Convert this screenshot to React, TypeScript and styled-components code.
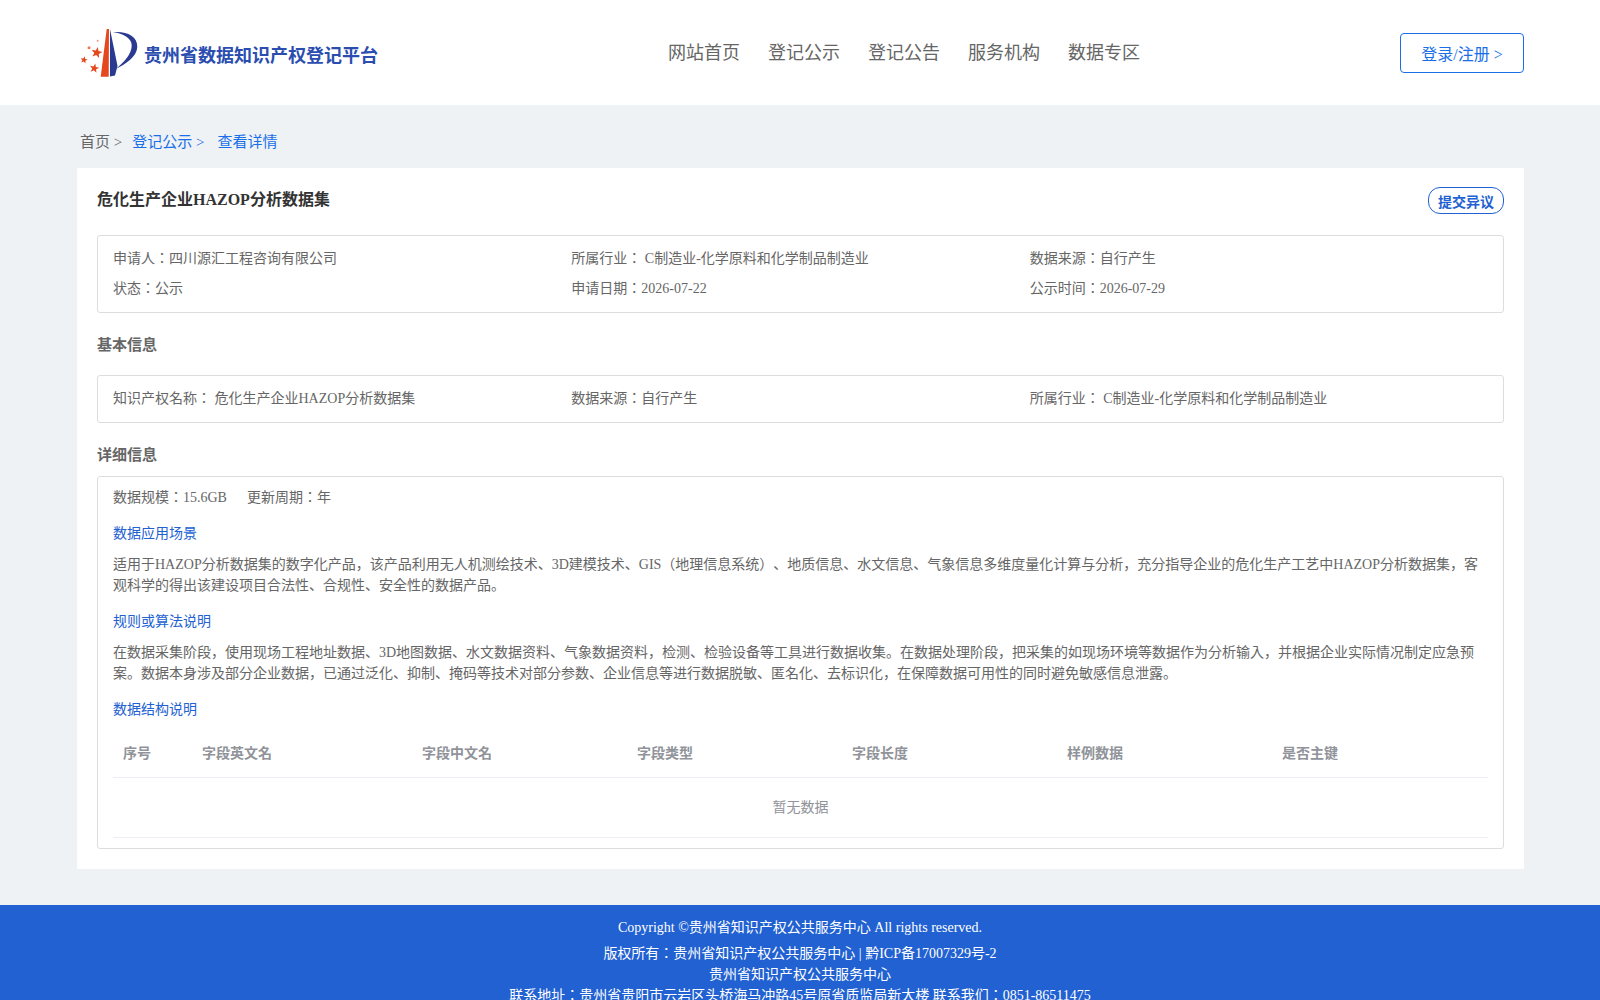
import React from 'react';
import styled, { createGlobalStyle } from 'styled-components';

const GlobalStyle = createGlobalStyle`
  html, body {
    margin: 0;
    padding: 0;
    height: 1000px;
    overflow: hidden;
    background: #eff2f5;
    font-family: "Liberation Serif", "Noto Sans CJK JP", serif;
    font-size: 14px;
    color: #666;
    text-spacing-trim: space-all;
  }
  * { box-sizing: border-box; }
`;

const Header = styled.header`
  height: 105px;
  background: #fff;
  padding: 0 76px 0 80px;
  display: flex;
  align-items: flex-start;
`;

const Brand = styled.div`
  width: 588px;
  padding-top: 28px;
  display: flex;
  align-items: center;
  gap: 6px;
`;

const BrandName = styled.span`
  font-family: "Liberation Sans", "Noto Sans CJK JP", sans-serif;
  font-size: 18px;
  font-weight: 700;
  color: #2b4db0;
  padding-top: 2px;
`;

const Nav = styled.nav`
  display: flex;
  gap: 28px;
  padding-top: 39px;
  flex: 1;
`;

const NavLink = styled.a`
  font-size: 18px;
  line-height: 28px;
  color: #666;
`;

const LoginButton = styled.a`
  margin-top: 33px;
  width: 124px;
  height: 40px;
  border: 1px solid #1a6fe8;
  border-radius: 4px;
  color: #1a6fe8;
  font-size: 16px;
  display: flex;
  align-items: center;
  justify-content: center;
`;

const Main = styled.main`
  padding: 0 76px 0 77px;
`;

const Breadcrumb = styled.div`
  height: 63px;
  padding: 27px 0 0 3px;
  font-size: 15px;
  line-height: 20px;
  display: flex;
`;

const Crumb = styled.span<{ $active?: boolean; $gap?: number }>`
  color: ${p => (p.$active ? '#1a6fe8' : '#666')};
  margin-right: ${p => p.$gap ?? 0}px;
`;

const Card = styled.section`
  background: #fff;
  padding: 20px;
  height: 701px;
`;

const TitleRow = styled.div`
  display: flex;
  justify-content: space-between;
  align-items: flex-start;
  height: 47px;
`;

const Title = styled.h1`
  margin: 0;
  font-size: 16px;
  line-height: 24px;
  font-weight: 700;
  color: #333;
`;

const ObjectionButton = styled.a`
  margin-top: -1px;
  width: 76px;
  height: 27px;
  border: 1px solid #2161d1;
  border-radius: 12px;
  color: #2161d1;
  font-weight: 700;
  display: flex;
  align-items: center;
  justify-content: center;
`;

const InfoBox = styled.div`
  border: 1px solid #ddd;
  border-radius: 3px;
  padding: 12px 15px;
`;

const InfoGrid = styled.div`
  display: grid;
  grid-template-columns: repeat(3, 1fr);
  row-gap: 8px;
  line-height: 22px;
`;

const SectionTitle = styled.h2<{ $height: number }>`
  margin: 0;
  height: ${p => p.$height}px;
  padding-top: 22px;
  font-size: 15px;
  line-height: 20px;
  font-weight: 700;
  color: #666;
`;

const DetailBox = styled(InfoBox)`
  height: 373px;
  padding: 10px 15px;
  line-height: 22px;
`;

const Stats = styled.div`
  display: flex;
  gap: 20px;
`;

const SubTitle = styled.div`
  margin-top: 14px;
  color: #2161d1;

  p + & {
    margin-top: 15px;
  }
`;

const Paragraph = styled.p`
  margin: 9px 0 0;
  line-height: 21px;
`;

const FieldTable = styled.div`
  margin-top: 8px;
`;

const HeadRow = styled.div`
  display: grid;
  grid-template-columns: 79px 220px repeat(5, 215px);
  height: 49px;
  padding: 2px 0 0 10px;
  align-items: center;
  border-bottom: 1px solid #ebeef5;
  font-weight: 700;
  color: #909399;
`;

const EmptyRow = styled.div`
  height: 60px;
  display: flex;
  align-items: center;
  justify-content: center;
  border-bottom: 1px solid #ebeef5;
  color: #909399;
`;

const Footer = styled.footer`
  margin-top: 36px;
  background: #2161d1;
  color: #fff;
  text-align: center;
  padding-top: 12px;
  line-height: 21px;
`;

const FooterLine = styled.div<{ $gap?: number }>`
  margin-bottom: ${p => p.$gap ?? 0}px;
`;

const starPoints = (cx: number, cy: number, r: number) =>
  Array.from({ length: 10 }, (_, i) => {
    const radius = i % 2 === 0 ? r : r * 0.42;
    const angle = -Math.PI / 2 + (i * Math.PI) / 5 + 0.2;
    return `${(cx + radius * Math.cos(angle)).toFixed(2)},${(cy + radius * Math.sin(angle)).toFixed(2)}`;
  }).join(' ');

const Logo = () => (
  <svg width="58" height="50" viewBox="0 0 58 50">
    <path d="M26.7 1 L29 1 L28.7 48.7 L20.7 48.7 Z" fill="#e5481f" />
    <path d="M30 1 L30 48.5 L35 47.5 L37.5 38 Z" fill="#2a3a90" />
    <path d="M33.3 4.3 C46 3 57.5 8 57.3 18.7 C57 29 45 36 36 41 C44 34 52 26 51.7 17 C51.4 10 43 5.5 33.3 4.3 Z" fill="#2a3a90" />
    <polygon points={starPoints(16.7, 24.7, 5.8)} fill="#e5481f" />
    <polygon points={starPoints(4, 32, 3.8)} fill="#e5481f" />
    <polygon points={starPoints(14.3, 40.3, 5)} fill="#e5481f" />
    <circle cx="9" cy="19.7" r="1.5" fill="#ee7a55" />
    <circle cx="17.7" cy="12.7" r="1" fill="#ee9a80" />
  </svg>
);

const fieldHeads = ['序号', '字段英文名', '字段中文名', '字段类型', '字段长度', '样例数据', '是否主键'];

export default function App() {
  return (
    <>
      <GlobalStyle />
      <Header>
        <Brand>
          <Logo />
          <BrandName>贵州省数据知识产权登记平台</BrandName>
        </Brand>
        <Nav>
          <NavLink>网站首页</NavLink>
          <NavLink>登记公示</NavLink>
          <NavLink>登记公告</NavLink>
          <NavLink>服务机构</NavLink>
          <NavLink>数据专区</NavLink>
        </Nav>
        <LoginButton>登录/注册 &gt;</LoginButton>
      </Header>
      <Main>
        <Breadcrumb>
          <Crumb $gap={10}>首页 &gt;</Crumb>
          <Crumb $active $gap={13}>登记公示 &gt;</Crumb>
          <Crumb $active>查看详情</Crumb>
        </Breadcrumb>
        <Card>
          <TitleRow>
            <Title>危化生产企业HAZOP分析数据集</Title>
            <ObjectionButton>提交异议</ObjectionButton>
          </TitleRow>
          <InfoBox>
            <InfoGrid>
              <span>申请人：四川源汇工程咨询有限公司</span>
              <span>所属行业： C制造业-化学原料和化学制品制造业</span>
              <span>数据来源：自行产生</span>
              <span>状态：公示</span>
              <span>申请日期：2026-07-22</span>
              <span>公示时间：2026-07-29</span>
            </InfoGrid>
          </InfoBox>
          <SectionTitle $height={62}>基本信息</SectionTitle>
          <InfoBox>
            <InfoGrid>
              <span>知识产权名称： 危化生产企业HAZOP分析数据集</span>
              <span>数据来源：自行产生</span>
              <span>所属行业： C制造业-化学原料和化学制品制造业</span>
            </InfoGrid>
          </InfoBox>
          <SectionTitle $height={53}>详细信息</SectionTitle>
          <DetailBox>
            <Stats>
              <span>数据规模：15.6GB</span>
              <span>更新周期：年</span>
            </Stats>
            <SubTitle>数据应用场景</SubTitle>
            <Paragraph>
              适用于HAZOP分析数据集的数字化产品，该产品利用无人机测绘技术、3D建模技术、GIS（地理信息系统）、地质信息、水文信息、气象信息多维度量化计算与分析，充分指导企业的危化生产工艺中HAZOP分析数据集，客观科学的得出该建设项目合法性、合规性、安全性的数据产品。
            </Paragraph>
            <SubTitle>规则或算法说明</SubTitle>
            <Paragraph>
              在数据采集阶段，使用现场工程地址数据、3D地图数据、水文数据资料、气象数据资料，检测、检验设备等工具进行数据收集。在数据处理阶段，把采集的如现场环境等数据作为分析输入，并根据企业实际情况制定应急预案。数据本身涉及部分企业数据，已通过泛化、抑制、掩码等技术对部分参数、企业信息等进行数据脱敏、匿名化、去标识化，在保障数据可用性的同时避免敏感信息泄露。
            </Paragraph>
            <SubTitle>数据结构说明</SubTitle>
            <FieldTable>
              <HeadRow>
                {fieldHeads.map(h => (
                  <span key={h}>{h}</span>
                ))}
              </HeadRow>
              <EmptyRow>暂无数据</EmptyRow>
            </FieldTable>
          </DetailBox>
        </Card>
      </Main>
      <Footer>
        <FooterLine $gap={5}>Copyright ©贵州省知识产权公共服务中心 All rights reserved.</FooterLine>
        <FooterLine>版权所有：贵州省知识产权公共服务中心 | 黔ICP备17007329号-2</FooterLine>
        <FooterLine>贵州省知识产权公共服务中心</FooterLine>
        <FooterLine>联系地址：贵州省贵阳市云岩区头桥海马冲路45号原省质监局新大楼 联系我们：0851-86511475</FooterLine>
      </Footer>
    </>
  );
}
